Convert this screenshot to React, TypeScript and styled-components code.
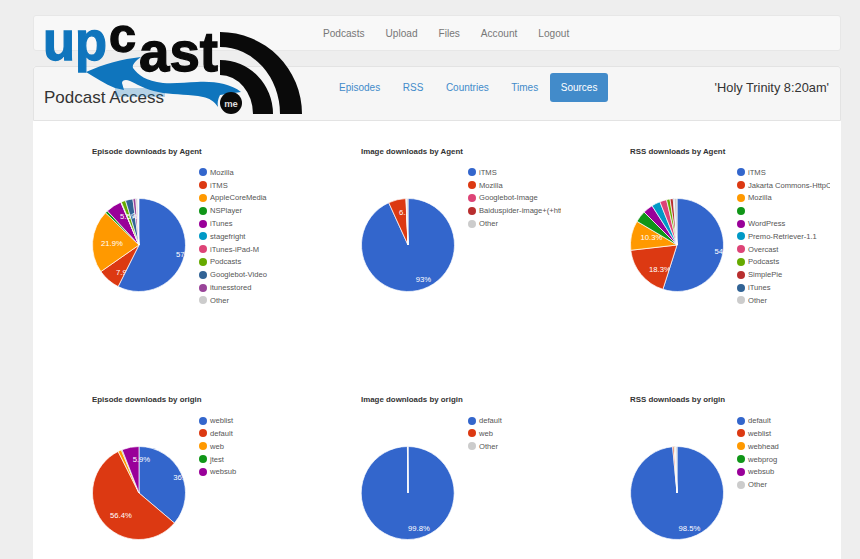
import React from "react";
import styled, { createGlobalStyle } from "styled-components";

const GlobalStyle = createGlobalStyle`
  html, body { margin: 0; padding: 0; height: 100%; overflow: hidden; background: #eeeeee; }
  body { font-family: "Liberation Sans", Arial, sans-serif; color: #333; }
`;

const Page = styled.div`
  position: relative;
  width: 860px;
  height: 559px;
  overflow: hidden;
  box-sizing: border-box;
  padding: 15px 19px 0 33px;
  display: flex;
  flex-direction: column;
  gap: 15px;
`;

const TopBar = styled.nav`
  height: 36px;
  box-sizing: border-box;
  background: #f8f8f8;
  border: 1px solid #e7e7e7;
  border-radius: 3px;
  display: flex;
  align-items: center;
  gap: 21px;
  padding-left: 289px;
`;

const TopLink = styled.a`
  font-size: 10.1px;
  color: #777;
`;

const Card = styled.section`
  flex: 1;
  min-height: 0;
  display: flex;
  flex-direction: column;
  background: #fff;
  border-radius: 3px 3px 0 0;
`;

const CardHeader = styled.header`
  height: 55px;
  box-sizing: border-box;
  background: #f6f6f6;
  border: 1px solid #e3e3e3;
  border-radius: 3px 3px 0 0;
  display: flex;
  align-items: center;
  padding: 0 11px 13px 10px;
`;

const PageTitle = styled.h1`
  margin: 21px 0 0;
  width: 284px;
  font-size: 17px;
  line-height: 20px;
  font-weight: 400;
  color: #333;
`;

const Tabs = styled.div`
  display: flex;
  align-items: center;
  gap: 0.6px;
`;

const Tab = styled.a<{ $active?: boolean }>`
  font-size: 10px;
  line-height: 29px;
  height: 29px;
  padding: 0 11px;
  border-radius: 3px;
  color: ${(p) => (p.$active ? "#fff" : "#428bca")};
  background: ${(p) => (p.$active ? "#428bca" : "transparent")};
`;

const Subject = styled.div`
  margin-left: auto;
  font-size: 12.8px;
  color: #333;
`;

const ChartGrid = styled.div`
  display: grid;
  grid-template-columns: repeat(3, 269px);
  grid-auto-rows: 248.3px;
  padding: 25px 0 0 59px;
`;

const ChartCell = styled.article`
  min-width: 0;
`;

const ChartTitle = styled.h2`
  margin: 0;
  font-size: 7.9px;
  line-height: 12px;
  font-weight: 700;
  color: #333;
`;

const ChartBody = styled.div`
  display: flex;
  align-items: flex-start;
  margin-top: 8px;
`;

const PieWrap = styled.div`
  flex: none;
  width: 94px;
  height: 94px;
  margin-top: 32px;
`;

const Legend = styled.ul`
  list-style: none;
  margin: 0 0 0 13px;
  padding: 0;
  width: 93px;
  overflow: hidden;
`;

const LegendRow = styled.li`
  display: flex;
  align-items: center;
  height: 12.8px;
  font-size: 7.6px;
  color: #555;
  white-space: nowrap;
`;

const Dot = styled.span<{ $color: string }>`
  flex: none;
  width: 8px;
  height: 8px;
  border-radius: 50%;
  margin-right: 3px;
  background: ${(p) => p.$color};
`;

const LogoLayer = styled.svg`
  position: absolute;
  left: 0;
  top: 0;
  pointer-events: none;
`;

const C = {
  blue: "#3366cc",
  red: "#dc3912",
  orange: "#ff9900",
  green: "#109618",
  purple: "#990099",
  teal: "#0099c6",
  pink: "#dd4477",
  lime: "#66aa00",
  brick: "#b82e2e",
  navy: "#316395",
  plum: "#994499",
  grey: "#cccccc",
};

type Entry = [string, string, number];
type Label = [number, string, number, number, boolean?];
type Chart = { id: string; title: string; entries: Entry[]; labels: Label[] };

const charts: Chart[] = [
  {
    id: "a",
    title: "Episode downloads by Agent",
    entries: [
      ["Mozilla", C.blue, 57.4],
      ["iTMS", C.red, 7.9],
      ["AppleCoreMedia", C.orange, 21.9],
      ["NSPlayer", C.green, 0.9],
      ["iTunes", C.purple, 5.5],
      ["stagefright", C.teal, 0.1],
      ["iTunes-iPad-M", C.pink, 0.1],
      ["Podcasts", C.lime, 1.5],
      ["Googlebot-Video", C.navy, 2.6],
      ["itunesstored", C.plum, 1.0],
      ["Other", C.grey, 0.6],
    ],
    labels: [
      [0, "57.4%", 37, 12],
      [1, "7.9%", -23, 30],
      [2, "21.9%", -38, 1],
      [4, "5.5%", -19, -26, true],
      [8, "2.6%", -7, -27],
    ],
  },
  {
    id: "b",
    title: "Image downloads by Agent",
    entries: [
      ["iTMS", C.blue, 93.2],
      ["Mozilla", C.red, 6.1],
      ["Googlebot-Image", C.pink, 0.1],
      ["Baiduspider-image+(+http://www.baidu.com/search)", C.brick, 0.1],
      ["Other", C.grey, 0.5],
    ],
    labels: [
      [0, "93%", 7.7, 37],
      [1, "6.1%", -9, -30],
    ],
  },
  {
    id: "c",
    title: "RSS downloads by Agent",
    entries: [
      ["iTMS", C.blue, 54.9],
      ["Jakarta Commons-HttpClient/3.1", C.red, 18.3],
      ["Mozilla", C.orange, 10.3],
      ["", C.green, 4],
      ["WordPress", C.purple, 3.5],
      ["Premo-Retriever-1.1", C.teal, 3],
      ["Overcast", C.pink, 2.4],
      ["Podcasts", C.lime, 1.2],
      ["SimplePie", C.brick, 1.1],
      ["iTunes", C.navy, 0.3],
      ["Other", C.grey, 1],
    ],
    labels: [
      [0, "54.9%", 37.5, 9],
      [1, "18.3%", -28, 27],
      [2, "10.3%", -36.5, -5],
    ],
  },
  {
    id: "d",
    title: "Episode downloads by origin",
    entries: [
      ["weblist", C.blue, 36.2],
      ["default", C.red, 56.4],
      ["web", C.orange, 1.2],
      ["jtest", C.green, 0.3],
      ["websub", C.purple, 5.9],
    ],
    labels: [
      [0, "36.2%", 34.3, -12.7],
      [1, "56.4%", -29, 25],
      [4, "5.9%", -6.3, -31.4, true],
    ],
  },
  {
    id: "e",
    title: "Image downloads by origin",
    entries: [
      ["default", C.blue, 99.8],
      ["web", C.red, 0.1],
      ["Other", C.grey, 0.1],
    ],
    labels: [[0, "99.8%", 0, 37.5]],
  },
  {
    id: "f",
    title: "RSS downloads by origin",
    entries: [
      ["default", C.blue, 98.5],
      ["weblist", C.red, 0.5],
      ["webhead", C.orange, 0.2],
      ["webprog", C.green, 0.2],
      ["websub", C.purple, 0.1],
      ["Other", C.grey, 0.5],
    ],
    labels: [[0, "98.5%", 1.5, 37.5]],
  },
];

function slicePath(from: number, to: number, r: number) {
  const a0 = (from / 100) * Math.PI * 2;
  const a1 = (to / 100) * Math.PI * 2;
  const x0 = 47 + r * Math.sin(a0);
  const y0 = 47 - r * Math.cos(a0);
  const x1 = 47 + r * Math.sin(a1);
  const y1 = 47 - r * Math.cos(a1);
  const large = to - from > 50 ? 1 : 0;
  return `M47 47L${x0.toFixed(2)} ${y0.toFixed(2)}A${r} ${r} 0 ${large} 1 ${x1.toFixed(2)} ${y1.toFixed(2)}Z`;
}

function Pie({ chart }: { chart: Chart }) {
  const paths: string[] = [];
  let run = 0;
  for (const e of chart.entries) {
    paths.push(slicePath(run, run + e[2], 46.5));
    run += e[2];
  }
  return (
    <svg width="94" height="94" viewBox="0 0 94 94">
      <defs>
        {chart.labels.map(([i]) => (
          <clipPath key={i} id={`clip-${chart.id}-${i}`}>
            <path d={paths[i]} />
          </clipPath>
        ))}
      </defs>
      {paths.map((d, i) => (
        <path key={i} d={d} fill={chart.entries[i][1]} stroke="#fff" strokeWidth="0.7" />
      ))}
      {chart.labels.map(([i, text, dx, dy, free]) => (
        <g key={i} clipPath={free ? undefined : `url(#clip-${chart.id}-${i})`}>
          <text x={47 + dx} y={47 + dy} fontSize="7.7" fill="#fff" fontFamily="'Liberation Sans', Arial, sans-serif">
            {text}
          </text>
        </g>
      ))}
    </svg>
  );
}

function Logo() {
  const font = "'Liberation Sans', Arial, sans-serif";
  return (
    <LogoLayer width="320" height="125" viewBox="0 0 320 125">
      <rect x="115" y="88" width="50" height="9" fill="#0f75bd" opacity="0.28" />
      <text x="43" y="60" fontFamily={font} fontWeight="700" fontSize="56" fill="#0f75bd" stroke="#0f75bd" strokeWidth="1.3" textLength="64" lengthAdjust="spacingAndGlyphs">up</text>
      <text x="109" y="52" fontFamily={font} fontWeight="700" fontSize="48" fill="#0a0a0a" stroke="#0a0a0a" strokeWidth="1.3" textLength="27" lengthAdjust="spacingAndGlyphs">c</text>
      <text x="139" y="71" fontFamily={font} fontWeight="700" fontSize="56" fill="#0a0a0a" stroke="#0a0a0a" strokeWidth="1.3" textLength="79" lengthAdjust="spacingAndGlyphs">ast</text>
      <path
        d="M86 72C104 64 122 59 141 57C135 61 132 65 133 68C138 75 146 81 163 83C176 84 186 82 197 82C212 81 230 83 241 92L220 95C218 99 217 103 218 107C214 101 209 98 203 97C190 94 176 95 163 93C150 91 140 86 130 81C126 79 122 80 122 83L124 90L115 88C105 84 96 78 86 72Z"
        fill="#0f75bd"
      />
      <path d="M220 32A82 82 0 0 1 302 114L280 114A60 67 0 0 0 220 47Z" fill="#0a0a0a" />
      <path d="M220 60A53 54 0 0 1 273 114L253 114A33 39 0 0 0 220 75Z" fill="#0a0a0a" />
      <circle cx="231" cy="103" r="11" fill="#0a0a0a" />
      <text x="231" y="106.5" textAnchor="middle" fontFamily={font} fontWeight="700" fontSize="9.5" fill="#ddd">me</text>
    </LogoLayer>
  );
}

export default function App() {
  return (
    <>
      <GlobalStyle />
      <Page>
        <TopBar>
          <TopLink>Podcasts</TopLink>
          <TopLink>Upload</TopLink>
          <TopLink>Files</TopLink>
          <TopLink>Account</TopLink>
          <TopLink>Logout</TopLink>
        </TopBar>
        <Card>
          <CardHeader>
            <PageTitle>Podcast Access</PageTitle>
            <Tabs>
              <Tab>Episodes</Tab>
              <Tab>RSS</Tab>
              <Tab>Countries</Tab>
              <Tab>Times</Tab>
              <Tab $active>Sources</Tab>
            </Tabs>
            <Subject>'Holy Trinity 8:20am'</Subject>
          </CardHeader>
          <ChartGrid>
            {charts.map((chart) => (
              <ChartCell key={chart.id}>
                <ChartTitle>{chart.title}</ChartTitle>
                <ChartBody>
                  <PieWrap>
                    <Pie chart={chart} />
                  </PieWrap>
                  <Legend>
                    {chart.entries.map(([name, color]) => (
                      <LegendRow key={name + color}>
                        <Dot $color={color} />
                        {name}
                      </LegendRow>
                    ))}
                  </Legend>
                </ChartBody>
              </ChartCell>
            ))}
          </ChartGrid>
        </Card>
        <Logo />
      </Page>
    </>
  );
}
